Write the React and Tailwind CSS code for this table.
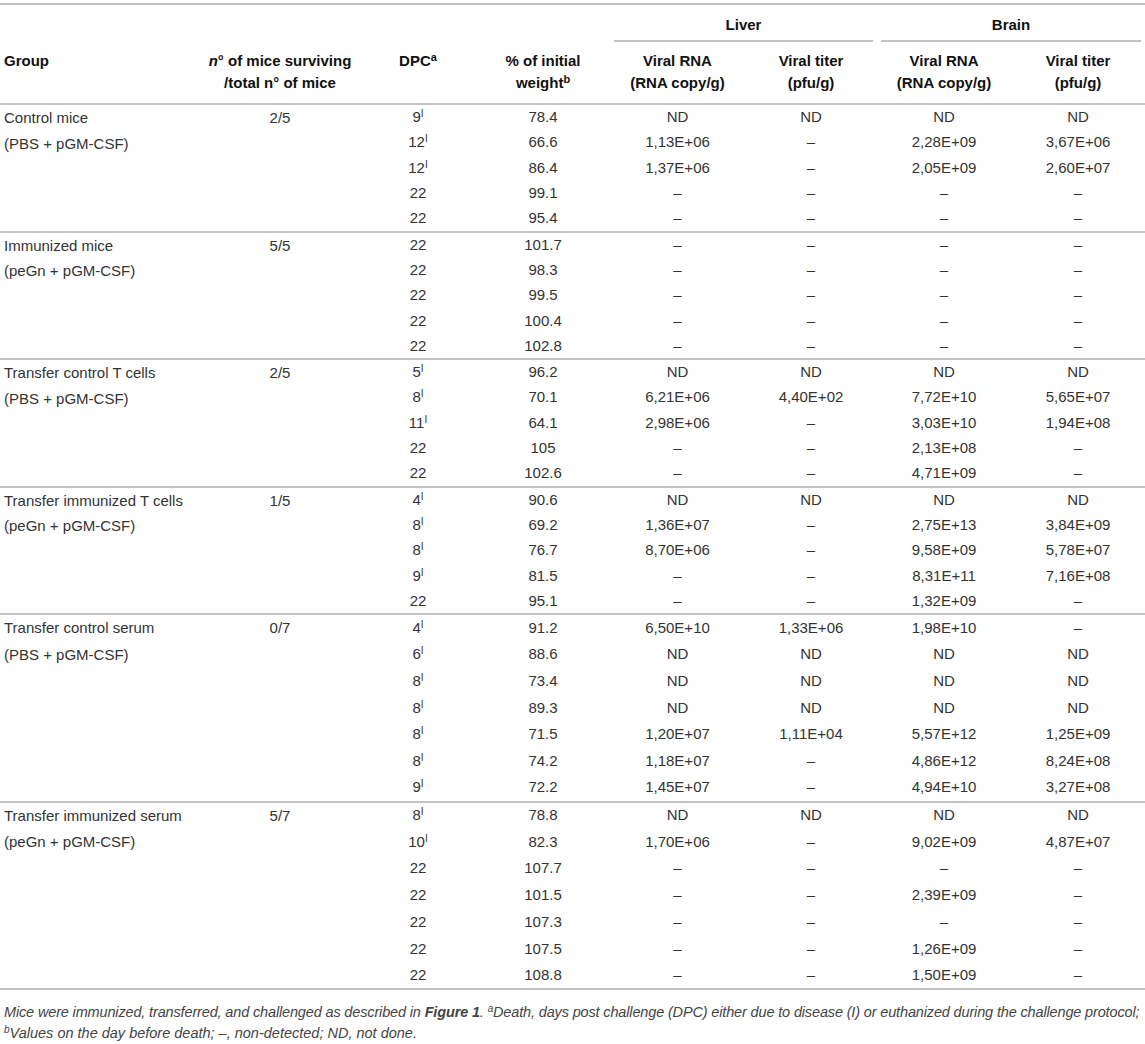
const groups = [
    {
        name: "Control mice",
        sub: "(PBS + pGM-CSF)",
        surv: "2/5",
        rows: [
            ["9", true, "78.4", "ND", "ND", "ND", "ND"],
            ["12", true, "66.6", "1,13E+06", "–", "2,28E+09", "3,67E+06"],
            ["12", true, "86.4", "1,37E+06", "–", "2,05E+09", "2,60E+07"],
            ["22", false, "99.1", "–", "–", "–", "–"],
            ["22", false, "95.4", "–", "–", "–", "–"],
        ],
    },
    {
        name: "Immunized mice",
        sub: "(peGn + pGM-CSF)",
        surv: "5/5",
        rows: [
            ["22", false, "101.7", "–", "–", "–", "–"],
            ["22", false, "98.3", "–", "–", "–", "–"],
            ["22", false, "99.5", "–", "–", "–", "–"],
            ["22", false, "100.4", "–", "–", "–", "–"],
            ["22", false, "102.8", "–", "–", "–", "–"],
        ],
    },
    {
        name: "Transfer control T cells",
        sub: "(PBS + pGM-CSF)",
        surv: "2/5",
        rows: [
            ["5", true, "96.2", "ND", "ND", "ND", "ND"],
            ["8", true, "70.1", "6,21E+06", "4,40E+02", "7,72E+10", "5,65E+07"],
            ["11", true, "64.1", "2,98E+06", "–", "3,03E+10", "1,94E+08"],
            ["22", false, "105", "–", "–", "2,13E+08", "–"],
            ["22", false, "102.6", "–", "–", "4,71E+09", "–"],
        ],
    },
    {
        name: "Transfer immunized T cells",
        sub: "(peGn + pGM-CSF)",
        surv: "1/5",
        rows: [
            ["4", true, "90.6", "ND", "ND", "ND", "ND"],
            ["8", true, "69.2", "1,36E+07", "–", "2,75E+13", "3,84E+09"],
            ["8", true, "76.7", "8,70E+06", "–", "9,58E+09", "5,78E+07"],
            ["9", true, "81.5", "–", "–", "8,31E+11", "7,16E+08"],
            ["22", false, "95.1", "–", "–", "1,32E+09", "–"],
        ],
    },
    {
        name: "Transfer control serum",
        sub: "(PBS + pGM-CSF)",
        surv: "0/7",
        rows: [
            ["4", true, "91.2", "6,50E+10", "1,33E+06", "1,98E+10", "–"],
            ["6", true, "88.6", "ND", "ND", "ND", "ND"],
            ["8", true, "73.4", "ND", "ND", "ND", "ND"],
            ["8", true, "89.3", "ND", "ND", "ND", "ND"],
            ["8", true, "71.5", "1,20E+07", "1,11E+04", "5,57E+12", "1,25E+09"],
            ["8", true, "74.2", "1,18E+07", "–", "4,86E+12", "8,24E+08"],
            ["9", true, "72.2", "1,45E+07", "–", "4,94E+10", "3,27E+08"],
        ],
    },
    {
        name: "Transfer immunized serum",
        sub: "(peGn + pGM-CSF)",
        surv: "5/7",
        rows: [
            ["8", true, "78.8", "ND", "ND", "ND", "ND"],
            ["10", true, "82.3", "1,70E+06", "–", "9,02E+09", "4,87E+07"],
            ["22", false, "107.7", "–", "–", "–", "–"],
            ["22", false, "101.5", "–", "–", "2,39E+09", "–"],
            ["22", false, "107.3", "–", "–", "–", "–"],
            ["22", false, "107.5", "–", "–", "1,26E+09", "–"],
            ["22", false, "108.8", "–", "–", "1,50E+09", "–"],
        ],
    },
];

export default function App() {
    return (
        <div className="w-[1145px] bg-white pt-[3px] font-['Liberation_Sans',Arial,sans-serif] text-[15px] text-[#333]">
            <table className="w-[1145px] table-fixed border-collapse">
                <colgroup>
                    <col className="w-[200px]" />
                    <col className="w-[160px]" />
                    <col className="w-[116px]" />
                    <col className="w-[134px]" />
                    <col className="w-[135px]" />
                    <col className="w-[132px]" />
                    <col className="w-[134px]" />
                    <col className="w-[134px]" />
                </colgroup>
                <thead className="font-bold text-[#111]">
                    {/* Organ headings */}
                    <tr className="border-t-2 border-[#c2c2c2]">
                        <th colSpan={4} className="h-[35px]"></th>
                        <th colSpan={2} className="h-[35px] px-[4px] align-top pt-[11px]">
                            <div className="pb-[6px] border-b-2 border-[#c2c2c2] leading-[18px]">Liver</div>
                        </th>
                        <th colSpan={2} className="h-[35px] px-[4px] align-top pt-[11px]">
                            <div className="pb-[6px] border-b-2 border-[#c2c2c2] leading-[18px]">Brain</div>
                        </th>
                    </tr>
                    <tr className="border-b-2 border-[#c2c2c2] leading-[22px]">
                        <th className="h-[62px] pl-[4px] pt-[8px] text-left align-top">Group</th>
                        <th className="pt-[8px] align-top text-center">
                            <i>n</i>° of mice surviving
                            <br />
                            /total n° of mice
                        </th>
                        <th className="pt-[8px] align-top text-center">
                            DPC<sup className="text-[11px]">a</sup>
                        </th>
                        <th className="pt-[8px] align-top text-center">
                            % of initial
                            <br />
                            weight<sup className="text-[11px]">b</sup>
                        </th>
                        <th className="pt-[8px] align-top text-center">
                            Viral RNA
                            <br />
                            (RNA copy/g)
                        </th>
                        <th className="pt-[8px] align-top text-center">
                            Viral titer
                            <br />
                            (pfu/g)
                        </th>
                        <th className="pt-[8px] align-top text-center">
                            Viral RNA
                            <br />
                            (RNA copy/g)
                        </th>
                        <th className="pt-[8px] align-top text-center">
                            Viral titer
                            <br />
                            (pfu/g)
                        </th>
                    </tr>
                </thead>
                {groups.map((g) => {
                    const tall = g.rows.length > 5;
                    return (
                        <tbody key={g.name} className="border-b-2 border-[#c2c2c2]">
                            {g.rows.map((r, i) => (
                                <tr key={i} className={tall ? "h-[26.8px]" : "h-[25.5px]"}>
                                    {i === 0 && (
                                        <>
                                            <td
                                                rowSpan={g.rows.length}
                                                className={`pl-[4px] align-top ${tall ? "leading-[26.8px]" : "leading-[25.5px]"}`}
                                            >
                                                {g.name}
                                                <br />
                                                {g.sub}
                                            </td>
                                            <td
                                                rowSpan={g.rows.length}
                                                className={`text-center align-top ${tall ? "leading-[26.8px]" : "leading-[25.5px]"}`}
                                            >
                                                {g.surv}
                                            </td>
                                        </>
                                    )}
                                    <td className="text-center">
                                        {r[0]}
                                        {r[1] && <sup className="text-[10px]">I</sup>}
                                    </td>
                                    <td className="text-center">{r[2]}</td>
                                    <td className="text-center">{r[3]}</td>
                                    <td className="text-center">{r[4]}</td>
                                    <td className="text-center">{r[5]}</td>
                                    <td className="text-center">{r[6]}</td>
                                </tr>
                            ))}
                        </tbody>
                    );
                })}
            </table>

            {/* Table footnote */}
            <div className="pl-[4px] pt-[12px] text-[14.5px] italic leading-[21px] text-[#444] whitespace-nowrap">
                <p className="tracking-[-0.15px]">
                    Mice were immunized, transferred, and challenged as described in <b>Figure 1</b>.{" "}
                    <sup className="text-[10px]">a</sup>Death, days post challenge (DPC) either due to disease (I) or euthanized during the challenge protocol;
                </p>
                <p>
                    <sup className="text-[10px]">b</sup>Values on the day before death; –, non-detected; ND, not done.
                </p>
            </div>
        </div>
    );
}
